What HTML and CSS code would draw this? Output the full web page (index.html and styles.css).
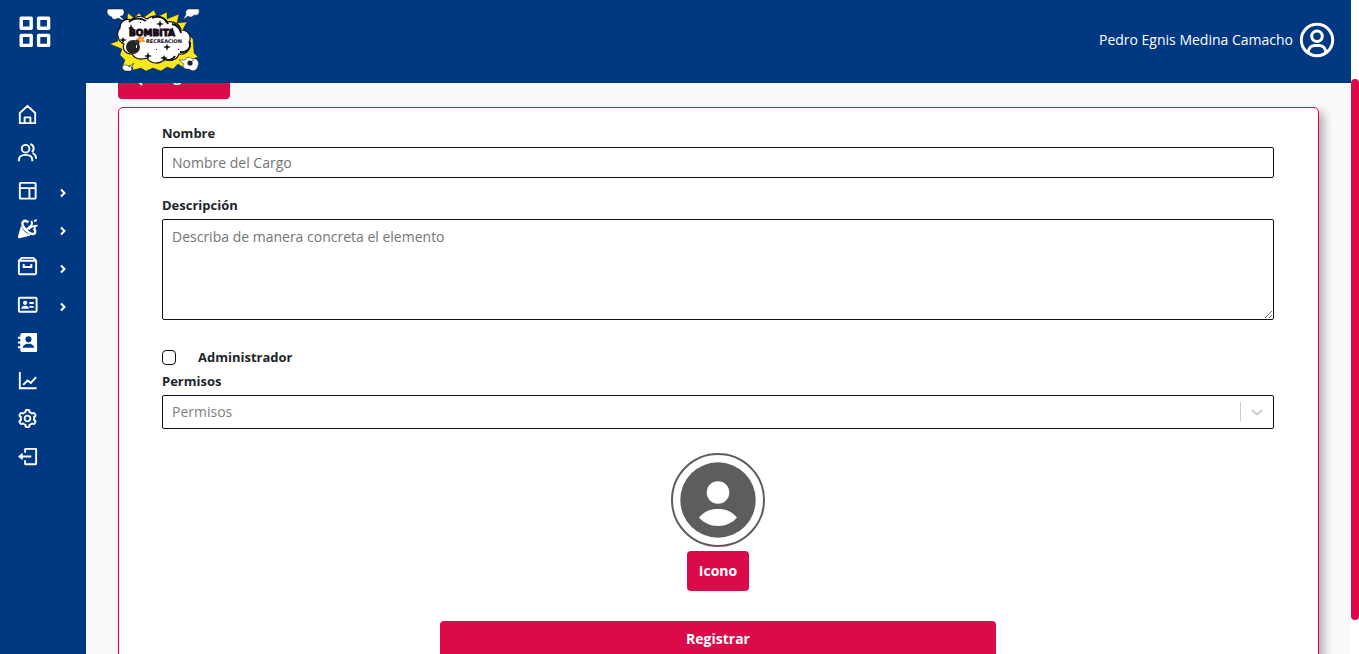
FILE: index.html
```html
<!DOCTYPE html>
<html lang="es">
<head>
<meta charset="utf-8">
<meta name="viewport" content="width=device-width, initial-scale=1">
<title>Bombita Recreación - Registrar cargo</title>
<link rel="stylesheet" href="styles.css">
</head>
<body>
<div class="shell">
  <div class="app">
    <header class="header">
      <button class="menu-button" type="button" aria-label="Menú">
        <svg width="32" height="32" viewBox="0 0 32 32" fill="none" stroke="currentColor" stroke-width="3.4" stroke-linejoin="round"><path d="M2.200 2.200h10v10h-10zM19.600 2.200h10v10h-10zM2.200 19.400h10v10h-10zM19.600 19.400h10v10h-10z"/></svg>
      </button>
      <a class="logo" href="#" aria-label="Bombita Recreación">
        <svg width="94" height="64" viewBox="0 0 94 64">
          <path fill="#f8e71c" stroke="#222" stroke-width=".4" d="M22 5l6 5 5-5 4 5 11-8 3 7 10-5v7l12-5-2 9 10-1-4 7 10 10 1 14 4 4-6 2 4 6-8-2-2 6-8-5-5 5-6-2-6 4-8-3-7 3-5-3-8 2-1-5-10 3 3-8-5-5 2-6-12-5 8-3-1-8 9-4z"/>
          <g fill="#fff" stroke="#171717" stroke-width=".5">
            <path d="M2 1h15c3 5-1 8-3 7l6 6-8-4c-4 3-7 0-6-1-5-1-6-6-4-8zM82 1h11c1 5-1 7-5 6-2 3-5 2-6 1l-5 4 3-6c-1-2 0-4 2-5zM79 52c2-4 6-3 7-1 5-2 8 4 6 7-1 5-6 6-9 3-5 1-7-3-5-5l-5-4zM19 57c3 0 4 1 4 2l5-4-3 5c2 1 0 3-1 3h-5c-3-2-4-5 0-6z"/>
          </g>
          <path fill="#fff" stroke="#111" stroke-width="1.200" d="M14 20c0-7 6-10 11-8 5-5 12-4 16-1 8-6 17-2 19 3 8-2 14 3 15 8 8 0 11 7 8 12 3 6-2 13-10 12-2 6-9 8-14 5-6 6-14 5-18-1-6 2-12 1-15-4-7 0-10-5-8-10-7-3-8-12-4-16z"/>
          <path fill="none" stroke="#111" stroke-width="1.800" d="M23 14c5-5 12-4 17-1M46 10c7-3 14 0 16 6M66 16c6 1 8 4 9 9M84 34c1 7-4 11-10 10M69 48c-3 5-8 5-12 2"/>
          <path fill="#161616" d="M54 12l1 3 3 1-3 1-1 3-1-3-3-1 3-1zM25 16l1 3 2 1-2 1-1 3-1-3-2-1 2-1zM17 29l1 2 3 1-3 1-1 3-1-3-3-1 3-1zM61 36l1 2 3 1-3 1-1 3-1-3-3-1 3-1zM42 44l1 3 3 1-3 1-1 3-1-3-3-1 3-1zM58 47l1 2 3 1-3 1-1 3-1-3-3-1 3-1zM34 14h1v1h-1zM66 20h1v1h-1zM72 41h1v1h-1zM50 41h1v1h-1z"/>
          <circle cx="27" cy="39" r="7" fill="#242424"/><path fill="#333" d="M28 33l4-2 2 3-3 3z"/><path fill="#eee" d="M30 37h1v3h-1z"/>
          <path fill="#f58220" d="M34 26l1.500 3.500 3.500-1-1.500 3 2 2.500-4-.5-2.500 2.500v-3.500l-3-1.500 3-1.500z"/><circle cx="35" cy="31.500" r="1.300" fill="#ffd83a"/>
          <circle cx="84" cy="55" r="2.600" fill="#222"/><path d="M86 53l2-1" stroke="#e56"/>
          <text class="logo-title" x="23" y="28">BOMBITA</text>
          <text class="logo-subtitle" x="40" y="35">RECREACION</text>
        </svg>
      </a>
      <a class="account" href="#">
        <span>Pedro Egnis Medina Camacho</span>
        <svg width="36" height="36" viewBox="0 0 36 36" fill="none" stroke="currentColor" stroke-width="3"><circle cx="18" cy="18" r="15.700"/><circle cx="18" cy="14.300" r="5.300"/><path d="M9 30c1-5 4-6.500 7-6.500h4c3 0 6 1.500 7 6.500"/></svg>
      </a>
    </header>
    <div class="body">
      <nav class="sidebar" aria-label="Principal">
        <a class="nav-item" href="#" aria-label="Inicio"><svg class="nav-icon" viewBox="0 0 24 24" fill="none" stroke="currentColor" stroke-width="2" stroke-linejoin="round"><path d="M4 10.500L12 3l8 7.500V21H4zM9 21v-6h6v6"/></svg></a>
        <a class="nav-item" href="#" aria-label="Usuarios"><svg class="nav-icon" viewBox="0 0 24 24" fill="none" stroke="currentColor" stroke-width="2"><circle cx="10" cy="8" r="4"/><path d="M3 21v-1c0-4 3-5.500 7-5.500s7 1.500 7 5.500v1M15 3.200c4 1 4.500 6 1.500 8.300M17.500 12.500c2.500 1.500 3.500 3 3.500 6"/></svg></a>
        <a class="nav-item" href="#" aria-label="Salones"><svg class="nav-icon" viewBox="0 0 24 24" fill="none" stroke="currentColor" stroke-width="2"><rect x="4" y="4" width="16.500" height="16.500" rx="1"/><path d="M4 9.500h16.500M14 9.500v11"/></svg><svg class="nav-arrow" viewBox="0 0 8 10"><path d="M2 1.500L5.500 5 2 8.500"/></svg></a>
        <a class="nav-item" href="#" aria-label="Eventos"><svg class="nav-icon" viewBox="0 0 24 24" fill="none" stroke="currentColor" stroke-width="2"><path d="M5.500 10L2.500 20.500q-.3 1.500 1.200 1.200L14.500 19C10 17.500 7 14.500 5.500 10z" fill="currentColor" stroke-width="1"/><path d="M7.500 4.800C3.500 8.500 15.500 21 19.500 17c1.500-1.500 0-4-1-5M13 5.500c-2-1.500-4-2-5.500-.7" stroke-width="2.600"/><path d="M10.500 13.500l5.500-5c1-1 1-2.500 0-4.500M13 13c3-3.500 5.500-4 9.500-4M19 4.500l2.500-1.500M19.500 9v3"/></svg><svg class="nav-arrow" viewBox="0 0 8 10"><path d="M2 1.500L5.500 5 2 8.500"/></svg></a>
        <a class="nav-item" href="#" aria-label="Inventario"><svg class="nav-icon" viewBox="0 0 24 24" fill="currentColor"><path d="M21.706 5.292l-2.999-2.999A.996.996 0 0 0 18 2H6a.996.996 0 0 0-.707.293L2.294 5.292A.994.994 0 0 0 2 6v13c0 1.103.897 2 2 2h16c1.103 0 2-.897 2-2V6a.994.994 0 0 0-.294-.708zM6.414 4h11.172l1 1H5.414zM4 19V7h16v12z"/><path d="M7 9.500v4h10v-4h-2v2H9v-2z"/></svg><svg class="nav-arrow" viewBox="0 0 8 10"><path d="M2 1.500L5.500 5 2 8.500"/></svg></a>
        <a class="nav-item" href="#" aria-label="Personal"><svg class="nav-icon" viewBox="0 0 24 24" fill="none" stroke="currentColor" stroke-width="2"><rect x="3" y="5" width="18.500" height="14.500" rx="1"/><path d="M14 10.500h4.500M14 14.500h4.500"/><circle cx="9.500" cy="10.300" r="2.200" fill="currentColor" stroke="none"/><path d="M5.500 16.500c0-2 1.500-3.300 4-3.300s4 1.300 4 3.300z" fill="currentColor" stroke="none"/></svg><svg class="nav-arrow" viewBox="0 0 8 10"><path d="M2 1.500L5.500 5 2 8.500"/></svg></a>
        <a class="nav-item" href="#" aria-label="Contactos"><svg class="nav-icon" viewBox="0 0 24 24" fill="currentColor"><path fill-rule="evenodd" d="M20.500 2H6.500C5.400 2 4.500 2.900 4.500 4v2H2v2h2.500v3H2v2h2.500v3H2v2h2.500v2c0 1.100.9 2 2 2h14c1 0 1.500-.5 1.500-1.500v-17c0-1-.5-1.500-1.500-1.500zM13 5.500a3.200 3.200 0 1 1 0 6.400 3.200 3.200 0 0 1 0-6.400zM7 17.500c0-2.500 2.500-4.300 6-4.300s6 1.800 6 4.300z"/></svg></a>
        <a class="nav-item" href="#" aria-label="Reportes"><svg class="nav-icon" viewBox="0 0 24 24" fill="none" stroke="currentColor" stroke-width="2"><path d="M4 3v17h17.500M7.500 16.500l4.500-4.500 3.500 2.500 5.500-6"/></svg></a>
        <a class="nav-item" href="#" aria-label="Configuración"><svg class="nav-icon" viewBox="0 0 24 24" fill="currentColor"><path d="M12 16c2.206 0 4-1.794 4-4s-1.794-4-4-4-4 1.794-4 4 1.794 4 4 4zm0-6c1.084 0 2 .916 2 2s-.916 2-2 2-2-.916-2-2 .916-2 2-2z"/><path d="m2.845 16.136 1 1.730c.531.917 1.809 1.261 2.730.730l.529-.306A8.100 8.100 0 0 0 9 19.402V20c0 1.103.897 2 2 2h2c1.103 0 2-.897 2-2v-.598a8.132 8.132 0 0 0 1.896-1.111l.529.306c.923.530 2.198.188 2.731-.731l.999-1.729a2.001 2.001 0 0 0-.731-2.732l-.505-.292a7.718 7.718 0 0 0 0-2.224l.505-.292a2.002 2.002 0 0 0 .731-2.732l-.999-1.729c-.531-.920-1.808-1.265-2.731-.732l-.529.306A8.100 8.100 0 0 0 15 4.598V4c0-1.103-.897-2-2-2h-2c-1.103 0-2 .897-2 2v.598a8.132 8.132 0 0 0-1.896 1.111l-.529-.306c-.924-.531-2.200-.187-2.731.732l-.999 1.729a2.001 2.001 0 0 0 .731 2.732l.505.292a7.683 7.683 0 0 0 0 2.223l-.505.292a2.003 2.003 0 0 0-.731 2.733zm3.326-2.758A5.703 5.703 0 0 1 6 12c0-.462.058-.926.170-1.378a.999.999 0 0 0-.470-1.108l-1.123-.650.998-1.729 1.145.662a.997.997 0 0 0 1.188-.142 6.071 6.071 0 0 1 2.384-1.399A1 1 0 0 0 11 5.300V4h2v1.300a1 1 0 0 0 .708.956 6.083 6.083 0 0 1 2.384 1.399.999.999 0 0 0 1.188.142l1.144-.661 1 1.729-1.124.649a1 1 0 0 0-.470 1.108c.112.452.170.916.170 1.378 0 .461-.058.925-.171 1.378a1 1 0 0 0 .471 1.108l1.123.649-.998 1.729-1.145-.661a.996.996 0 0 0-1.188.142 6.071 6.071 0 0 1-2.384 1.399A1 1 0 0 0 13 18.700l.002 1.300H11v-1.300a1 1 0 0 0-.708-.956 6.083 6.083 0 0 1-2.384-1.399.992.992 0 0 0-1.188-.141l-1.144.662-1-1.729 1.124-.651a1 1 0 0 0 .471-1.108z"/></svg></a>
        <a class="nav-item" href="#" aria-label="Salir"><svg class="nav-icon" viewBox="0 0 24 24" fill="none" stroke="currentColor" stroke-width="2"><path d="M9.500 8V4.500q0-.5.500-.5h10.500q.5 0 .5.500v15q0 .5-.5.500H10q-.5 0-.5-.5V16M6 12h10"/><path d="M2 12l5-4v8z" fill="currentColor" stroke="none"/></svg></a>
      </nav>
      <main class="content">
        <button class="button button-back" type="button"><svg width="24" height="24" viewBox="0 0 24 24" fill="currentColor"><path d="M12.707 17.293 8.414 13H18v-2H8.414l4.293-4.293-1.414-1.414L4.586 12l6.707 6.707z"/></svg><span>Regresar</span></button>
        <form class="card">
          <div class="field">
            <label for="nombre">Nombre</label>
            <input class="control" id="nombre" type="text" placeholder="Nombre del Cargo">
          </div>
          <div class="field">
            <label for="descripcion">Descripción</label>
            <textarea class="control control-area" id="descripcion" placeholder="Describa de manera concreta el elemento"></textarea>
          </div>
          <div class="check">
            <input class="checkbox" id="administrador" type="checkbox">
            <label for="administrador">Administrador</label>
          </div>
          <div class="field">
            <label for="permisos">Permisos</label>
            <div class="select-wrap">
              <select class="control control-select" id="permisos"><option>Permisos</option></select>
              <svg class="select-arrow" width="34" height="20" viewBox="0 0 34 20" fill="none" stroke="#ccc"><path d="M.5 0v19"/><path d="M12 8l5 4.500L22 8" stroke-width="2"/></svg>
            </div>
          </div>
          <div class="picture">
            <svg width="94" height="94" viewBox="0 0 94 94"><circle cx="47" cy="47" r="46" fill="#fff" stroke="#5d5d5d" stroke-width="2"/><circle cx="47" cy="47" r="37.700" fill="#5d5d5d"/><circle cx="47" cy="39.500" r="11.300" fill="#fff"/><path fill="#fff" d="M28 64.500c5-6 11-8.500 19-8.500s14 2.500 19 8.500c-5 5.500-11 8.500-19 8.500s-14-3-19-8.500z"/></svg>
            <button class="button" type="button">Icono</button>
          </div>
          <button class="button button-submit" type="submit">Registrar</button>
        </form>
      </main>
    </div>
  </div>
  <div class="scroll-track" aria-hidden="true"><div class="scroll-thumb"></div></div>
</div>
</body>
</html>
```
FILE: styles.css
```css
:root {
  --blue: #003882;
  --pink: #db0b4a;
  --ink: #212529;
}
* { box-sizing: border-box; }
body {
  margin: 0;
  overflow: hidden;
  color: var(--ink);
  background: #fafafa;
  font: 14px/20px "Open Sans", "Noto Sans", sans-serif;
}
button, input, select, textarea { font: inherit; }
svg { display: block; flex: none; }
.shell { display: flex; height: 100vh; overflow: hidden; }
.app {
  display: flex;
  flex: 1;
  flex-direction: column;
  min-width: 0;
}
.header {
  z-index: 1;
  display: flex;
  flex: none;
  align-items: center;
  height: 83px;
  padding: 0 16px 3px 19px;
  color: #fff;
  background: var(--blue);
}
.menu-button {
  align-self: flex-start;
  margin-top: 16px;
  padding: 0;
  border: 0;
  color: inherit;
  background: none;
}
.logo { margin-left: 55px; }
.logo-title {
  fill: #180818;
  stroke: #180818;
  stroke-width: 1px;
  font: bold 9px "DejaVu Sans", sans-serif;
}
.logo-subtitle {
  fill: #180818;
  stroke-width: 0;
  font: bold 5px "DejaVu Sans", sans-serif;
}
.account {
  display: flex;
  gap: 6px;
  align-items: center;
  margin-left: auto;
  color: inherit;
  text-decoration: none;
}
.body { display: flex; flex: 1; min-height: 0; }
.sidebar {
  flex: none;
  width: 86px;
  padding-top: 12px;
  background: var(--blue);
}
.nav-item {
  display: flex;
  gap: 20px;
  align-items: center;
  height: 38px;
  padding-left: 16px;
  color: #fff;
}
.nav-icon { width: 23px; height: 23px; }
.nav-arrow {
  width: 8px;
  height: 10px;
  margin-top: 6px;
  fill: none;
  stroke: #fff;
  stroke-width: 2px;
}
.content {
  flex: 1;
  min-width: 0;
  padding: 0 32px;
}
.button {
  height: 40px;
  padding: 0 12px;
  border: 0;
  border-radius: 4px;
  color: #fff;
  background: var(--pink);
  font-weight: 700;
}
.button-back {
  display: flex;
  gap: 2px;
  align-items: center;
  justify-content: center;
  width: 112px;
  margin: -24px 0 8px;
}
.button-back span { padding-bottom: 4px; }
.card {
  display: flex;
  flex-direction: column;
  padding: 15px 44px 32px 43px;
  border: 1px solid var(--pink);
  border-radius: 5px;
  background: #fff;
  box-shadow: 5px 5px 10px rgba(0, 0, 0, .3);
}
.field { display: flex; flex-direction: column; gap: 4px; }
.field + .field { margin-top: 17px; }
label { font-size: 13px; font-weight: 700; }
.control {
  width: 100%;
  height: 31px;
  padding: 0 9px;
  border: 1px solid #111;
  border-radius: 2px;
  color: var(--ink);
  background: #fff;
}
.control::placeholder { color: #757575; }
.control-area { display: block; height: 101px; padding: 7px 9px; resize: vertical; }
.check {
  display: flex;
  gap: 22px;
  align-items: center;
  margin: 27px 0 4px;
}
.checkbox {
  width: 14px;
  height: 15px;
  margin: 0;
  border: 1px solid #111;
  border-radius: 4px;
  appearance: none;
  background: #fff;
}
.checkbox:checked { background: var(--blue); }
.select-wrap { display: grid; align-items: center; }
.control-select {
  grid-area: 1 / 1;
  height: 34px;
  color: #808080;
  appearance: none;
}
.select-arrow { grid-area: 1 / 1; justify-self: end; pointer-events: none; }
.picture {
  display: flex;
  flex-direction: column;
  gap: 4px;
  align-items: center;
  margin: 24px 0 30px;
}
.button-submit { align-self: center; width: 50%; height: 36px; }
.scroll-track { flex: none; width: 8px; padding-top: 79px; background: #fff; }
.scroll-thumb { height: 541px; border-radius: 4px; background: var(--pink); }
```
